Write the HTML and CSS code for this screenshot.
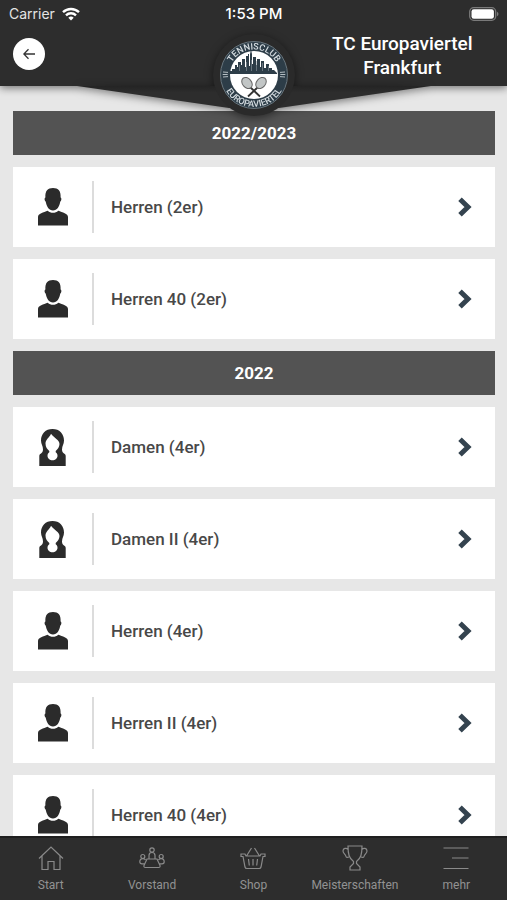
FILE: index.html
```html
<!DOCTYPE html>
<html lang="de">
<head>
    <meta charset="UTF-8">
    <meta name="viewport" content="width=device-width, initial-scale=1.0">
    <title>TC Europaviertel Frankfurt</title>
    <link rel="stylesheet" href="styles.css">
</head>
<body>
    <svg class="sprite" aria-hidden="true">
        <symbol id="herr" viewBox="0 0 30 38">
            <path d="M15 0c5.300 0 8 2.800 7.600 9.500 1.200.3 1 3.300-.3 4C21.500 18.500 19 22.500 15 22.500S8.500 18.500 7.700 13.500c-1.300-.7-1.500-3.700-.3-4C7 2.800 9.700 0 15 0z"/>
            <path d="M0 37.500V29c0-3.500 5.500-4.800 9.800-6.300 1.400 1.400 3.200 2 5.200 2s3.800-.6 5.200-2C24.500 24.200 30 25.500 30 29v8.500z"/>
        </symbol>
        <symbol id="dame" viewBox="0 0 27 37">
            <path fill-rule="evenodd" d="M13.500 0C20.500 0 25 4.800 25 11.500c0 3.500-2 5.500-2 9 0 2 .8 3 2 4 1.100.6 1.700 1.300 1.700 2.500v10H.3V27c0-1.200.6-1.900 1.700-2.500 1.200-1 2-2 2-4 0-3.500-2-5.500-2-9C2 4.800 6.500 0 13.500 0zM12 4.800C11 8 6.500 10.500 6.500 14.500c0 3.500 1.800 5.800 3.800 7.500v1.300C9 24 8.500 25.500 8.500 26.800c0 2.500 2.200 4.500 5 4.500s5-2 5-4.500c0-1.300-.5-2.800-1.800-3.500V22c2-1.700 3.800-4 3.800-7C20.500 11 15 9 12 4.800z"/>
        </symbol>
        <symbol id="pfeil" viewBox="0 0 14 20">
            <path d="M2 2.200l8 7.800-8 7.800" fill="none" stroke="#34434f" stroke-width="5"/>
        </symbol>
    </svg>

    <header class="header">
        <div class="statusbar">
            <span class="carrier">Carrier
                <svg width="18" height="14" viewBox="0 0 18 14" fill="none" stroke="#fff" stroke-width="2.400" aria-hidden="true">
                    <path d="M1 5.200a11.500 11.500 0 0 1 16 0M4 8.300a7.200 7.200 0 0 1 10 0"/>
                    <path d="M9 13.600l-2.700-2.900a3.900 3.900 0 0 1 5.400 0z" fill="#fff" stroke="none"/>
                </svg>
            </span>
            <span class="time">1:53 PM</span>
            <svg class="battery" width="30" height="14" viewBox="0 0 30 14" aria-hidden="true">
                <rect x=".7" y=".7" width="26" height="12.600" rx="4" fill="none" stroke="#7a7a7a" stroke-width="1.300"/>
                <rect x="2.500" y="2.300" width="22.400" height="9.400" rx="2.300" fill="#fff"/>
                <path d="M28 4.800c2 .8 2 3.600 0 4.400z" fill="#7a7a7a"/>
            </svg>
        </div>
        <div class="titlebar">
            <button class="back" type="button" aria-label="Zurück">
                <svg width="12" height="12" viewBox="0 0 12 12" fill="none" stroke="#333" stroke-width="1.300" aria-hidden="true">
                    <path d="M12 6H1M5.500 1.200L.8 6l4.700 4.800"/>
                </svg>
            </button>
            <h1>TC Europaviertel Frankfurt</h1>
        </div>
        <svg class="emblem" width="354" height="88" viewBox="0 0 354 88" role="img" aria-label="Tennisclub Europaviertel">
            <defs>
                <linearGradient id="flap" x1="0" y1="0" x2="0" y2="1">
                    <stop offset="0" stop-color="#242424"/>
                    <stop offset="0.300" stop-color="#2d2d2d"/>
                    <stop offset="1" stop-color="#2d2d2d"/>
                </linearGradient>
                <path id="top-arc" d="M151.500 45a25.500 25.500 0 0 1 51 0"/>
                <path id="bottom-arc" d="M145 45a32 32 0 0 0 64 0"/>
            </defs>
            <path d="M0 56h354L202 78h-50z" fill="url(#flap)"/>
            <circle cx="177" cy="45" r="41" fill="#2a2a2a"/>
            <circle cx="177" cy="45" r="33.500" fill="#2d3d48" stroke="#68757d" stroke-width="1"/>
            <circle cx="177" cy="45" r="24" fill="#fff"/>
            <path d="M153 44v-3h2v-2h3v-4h2v2h1v-5h3v3h1v-6h3v8h1V26h2v-2h1v12h1V24l1-4 1 4v10h1v-7h3v8h1v-6h3v8h1v-6h3v7h2v-4h3v4h3v2h2l3 3v1z" fill="#2d3d48"/>
            <path d="M162.500 41v-6m7 6v-9m5 9V30m5 11V31m6 10v-8m6 8v-5" stroke="#8d999f" stroke-width=".6"/>
            <g stroke="#333" fill="#c2c6c6">
                <path d="M173 57l10 9.500M181 57l-10 9.500" stroke-width="1.800"/>
                <ellipse cx="170" cy="53" rx="4.500" ry="6.200" transform="rotate(-40 170 53)" stroke="#666"/>
                <ellipse cx="184" cy="53" rx="4.500" ry="6.200" transform="rotate(40 184 53)" stroke="#666"/>
            </g>
            <g class="ring-text">
                <text><textPath href="#top-arc" startOffset="50%">TENNISCLUB</textPath></text>
                <text><textPath href="#bottom-arc" startOffset="50%">EUROPAVIERTEL</textPath></text>
            </g>
            <path d="M146 42l5 .4M145.700 44.500h5M146 47l5-.4M203 42.400l5-.4M203.300 44.500h5M203 46.600l5 .4" stroke="#c5cdd1" stroke-width=".9"/>
        </svg>
    </header>

    <main class="teams">
        <h2>2022/2023</h2>
        <a class="team" href="#">
            <span class="team-icon"><svg width="30" height="38" aria-hidden="true"><use href="#herr"/></svg></span>
            <span class="team-name">Herren (2er)</span>
            <svg width="14" height="20" aria-hidden="true"><use href="#pfeil"/></svg>
        </a>
        <a class="team" href="#">
            <span class="team-icon"><svg width="30" height="38" aria-hidden="true"><use href="#herr"/></svg></span>
            <span class="team-name">Herren 40 (2er)</span>
            <svg width="14" height="20" aria-hidden="true"><use href="#pfeil"/></svg>
        </a>

        <h2>2022</h2>
        <a class="team" href="#">
            <span class="team-icon"><svg width="27" height="37" aria-hidden="true"><use href="#dame"/></svg></span>
            <span class="team-name">Damen (4er)</span>
            <svg width="14" height="20" aria-hidden="true"><use href="#pfeil"/></svg>
        </a>
        <a class="team" href="#">
            <span class="team-icon"><svg width="27" height="37" aria-hidden="true"><use href="#dame"/></svg></span>
            <span class="team-name">Damen II (4er)</span>
            <svg width="14" height="20" aria-hidden="true"><use href="#pfeil"/></svg>
        </a>
        <a class="team" href="#">
            <span class="team-icon"><svg width="30" height="38" aria-hidden="true"><use href="#herr"/></svg></span>
            <span class="team-name">Herren (4er)</span>
            <svg width="14" height="20" aria-hidden="true"><use href="#pfeil"/></svg>
        </a>
        <a class="team" href="#">
            <span class="team-icon"><svg width="30" height="38" aria-hidden="true"><use href="#herr"/></svg></span>
            <span class="team-name">Herren II (4er)</span>
            <svg width="14" height="20" aria-hidden="true"><use href="#pfeil"/></svg>
        </a>
        <a class="team" href="#">
            <span class="team-icon"><svg width="30" height="38" aria-hidden="true"><use href="#herr"/></svg></span>
            <span class="team-name">Herren 40 (4er)</span>
            <svg width="14" height="20" aria-hidden="true"><use href="#pfeil"/></svg>
        </a>
    </main>

    <nav class="tabbar">
        <a href="#">
            <svg width="26" height="26" viewBox="0 0 26 26" aria-hidden="true">
                <path d="M1 13.500L13 2l12 11.500M4 11v13.500h6v-8h6v8h6V11"/>
            </svg>
            Start
        </a>
        <a href="#">
            <svg width="26" height="26" viewBox="0 0 26 26" aria-hidden="true">
                <circle cx="13" cy="5" r="2.200"/>
                <circle cx="3.800" cy="11.500" r="2"/>
                <circle cx="22.200" cy="11.500" r="2"/>
                <path d="M10 13.500v-3c0-2 1-3 3-3s3 1 3 3v3M5.500 18.800H3c-1.500 0-2.200-.8-2.200-2 0-2 1-3.200 3-3.200 1.300 0 2.200.4 2.700 1.400M20.500 18.800H23c1.500 0 2.200-.8 2.200-2 0-2-1-3.200-3-3.200-1.300 0-2.200.4-2.700 1.400M8 14h10l3 6.500c.4 1.300-.3 2-1.300 2H6.300c-1 0-1.700-.7-1.300-2z"/>
            </svg>
            Vorstand
        </a>
        <a href="#">
            <svg width="26" height="26" viewBox="0 0 26 26" aria-hidden="true">
                <path d="M1 9h4l1 2h14l1-2h4v2.500h-2L21 22c-.2.800-.8 1.500-1.800 1.500H6.800C5.800 23.500 5.200 22.800 5 22L3 11.500H1zM6.500 11l5-8M19.500 11l-5-8M8.500 14l.8 6.500M13 14v6.500M17.500 14l-.8 6.500"/>
            </svg>
            Shop
        </a>
        <a href="#">
            <svg width="26" height="26" viewBox="0 0 26 26" aria-hidden="true">
                <path d="M6 1h14c0 8-1 12-5.500 15.500v2L18 22v3H8v-3l3.500-3.500v-2C7 13 6 9 6 1zM6 4.500C4.500 2.500 1 3 1 6c0 2.500 2.500 3 3 5.500.2 1 1.500 1 3 .5M20 4.500c1.500-2 5-1.500 5 1.500 0 2.500-2.500 3-3 5.500-.2 1-1.500 1-3 .5"/>
            </svg>
            Meisterschaften
        </a>
        <a href="#">
            <svg width="26" height="26" viewBox="0 0 26 26" aria-hidden="true">
                <path d="M.5 3h25M9 13h16.500M.5 23.500h25"/>
            </svg>
            mehr
        </a>
    </nav>
</body>
</html>
```
FILE: styles.css
```css
* {
    box-sizing: border-box;
}

body {
    font-family: Roboto, 'Liberation Sans', sans-serif;
    background-color: #e7e7e7;
    color: #484848;
    margin: 0;
    height: 100vh;
    display: flex;
    flex-direction: column;
}

a {
    color: inherit;
    text-decoration: none;
}

svg {
    display: block;
    flex-shrink: 0;
}

.sprite {
    position: absolute;
    width: 0;
    height: 0;
}

/* Header */
.header {
    position: relative;
    z-index: 1;
    flex-shrink: 0;
    background-color: #2d2d2d;
    color: #fff;
    box-shadow: 0 2px 8px rgba(0, 0, 0, 0.5);
}

.statusbar {
    display: grid;
    grid-template-columns: 1fr auto 1fr;
    align-items: center;
    height: 27px;
    padding: 0 8px 0 9px;
    font-family: Inter, sans-serif;
    font-size: 14px;
}

.carrier {
    display: flex;
    align-items: center;
    gap: 7px;
    color: #e4e4e4;
}

.time {
    font-size: 15px;
    font-weight: 500;
}

.battery {
    justify-self: end;
}

.titlebar {
    display: grid;
    grid-template-columns: 1fr 1fr;
    column-gap: 88px;
    align-items: start;
    height: 59px;
    padding-top: 5px;
}

.back {
    display: flex;
    align-items: center;
    justify-content: center;
    width: 32px;
    height: 32px;
    margin: 6px 0 0 13px;
    padding: 0;
    border: none;
    border-radius: 50%;
    background-color: #fff;
    cursor: pointer;
}

.titlebar h1 {
    margin: 0;
    padding: 0 28px;
    font-size: 19px;
    font-weight: 500;
    line-height: 24px;
    text-align: center;
}

.emblem {
    position: absolute;
    left: 50%;
    bottom: -32px;
    transform: translateX(-50%);
    filter: drop-shadow(0 2px 4px rgba(0, 0, 0, 0.5));
}

.ring-text {
    font-size: 9px;
    font-weight: 500;
    fill: #d5dce0;
    text-anchor: middle;
}

/* Team list */
.teams {
    flex: 1;
    min-height: 0;
    overflow-y: auto;
    scrollbar-width: none;
    display: flex;
    flex-direction: column;
    gap: 12px;
    padding: 25px 12px 12px 13px;
}

.teams h2 {
    flex-shrink: 0;
    margin: 0;
    background-color: #535353;
    color: #fff;
    font-size: 17px;
    font-weight: 700;
    line-height: 44px;
    text-align: center;
}

.team {
    display: flex;
    align-items: center;
    flex-shrink: 0;
    height: 80px;
    padding-right: 23px;
    background-color: #fff;
}

.team-icon {
    display: flex;
    align-items: center;
    justify-content: center;
    width: 81px;
    height: 52px;
    border-right: 2px solid #dcdcdc;
    fill: #2b2b2b;
}

.team-name {
    flex: 1;
    padding-left: 17px;
    font-size: 17px;
    font-weight: 500;
}

/* Bottom navigation */
.tabbar {
    display: grid;
    grid-template-columns: repeat(5, 1fr);
    flex-shrink: 0;
    height: 64px;
    border-top: 2px solid #1f1f1f;
    background-color: #2d2d2d;
    color: #929292;
    font-size: 12px;
    line-height: 14px;
}

.tabbar a {
    display: flex;
    flex-direction: column;
    align-items: center;
    gap: 7px;
    padding-top: 7px;
}

.tabbar svg {
    fill: none;
    stroke: #8a8a8a;
    stroke-width: 1.2;
}
```
